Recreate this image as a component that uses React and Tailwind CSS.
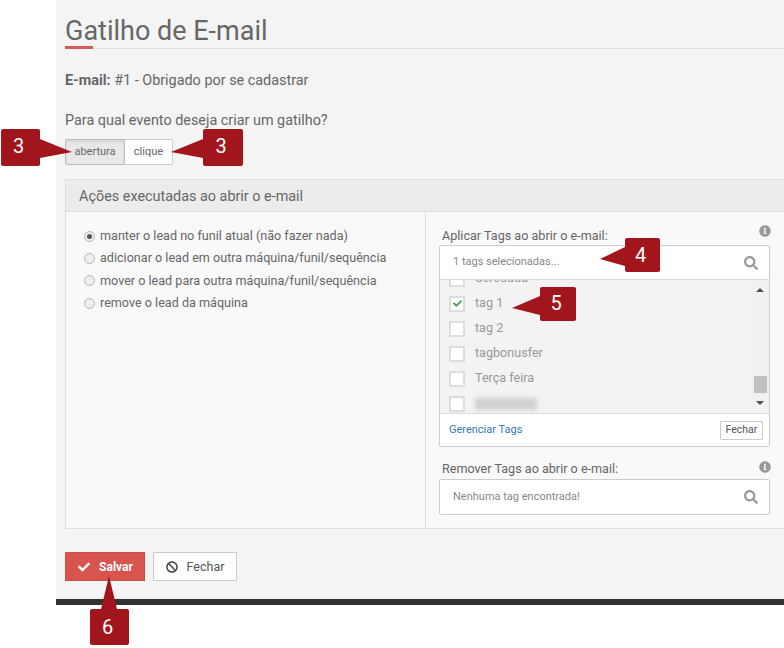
import React from 'react';
import { FaSearch, FaCheck, FaBan, FaInfoCircle } from 'react-icons/fa';

const options = [
  'manter o lead no funil atual (não fazer nada)',
  'adicionar o lead em outra máquina/funil/sequência',
  'mover o lead para outra máquina/funil/sequência',
  'remove o lead da máquina',
];

const Radio = ({ checked }) => (
  <span className="flex h-[11px] w-[11px] shrink-0 items-center justify-center rounded-full border border-[#b5b5b5] bg-[#eeeeee]">
    {checked && <span className="h-[5px] w-[5px] rounded-full bg-[#555555]" />}
  </span>
);

const TagRow = ({ label, checked, blurred }) => (
  <div className="flex h-[25px] items-center pl-[9px]">
    <span className="flex h-[16px] w-[16px] items-center justify-center border-2 border-[#dddddd] bg-white">
      {checked && <FaCheck className="text-[9px] text-[#3aa655]" />}
    </span>
    {blurred ? (
      <span className="ml-[10px] h-[12px] w-[62px] bg-[#d0d0d0] blur-[2px]" />
    ) : (
      <span className="ml-[10px] text-[12.6px] text-[#999999]">{label}</span>
    )}
  </div>
);

const SearchBox = ({ text, className }) => (
  <div className={`flex items-center justify-between bg-white pl-[13px] pr-[11px] ${className}`}>
    <span className="text-[11px] text-[#888888]">{text}</span>
    <FaSearch className="text-[14px] text-[#999999]" />
  </div>
);

// numbered marker painted on top of the screenshot
const Callout = ({ n, box, arrow, points }) => (
  <>
    <svg className="absolute" style={arrow} viewBox={`0 0 ${arrow.width} ${arrow.height}`}>
      <polygon points={points} fill="#a1161c" />
    </svg>
    <div
      className="absolute flex items-center justify-center rounded-[2px] bg-[#a1161c] pr-[4px] text-[20px] text-white"
      style={box}
    >
      {n}
    </div>
  </>
);

export default function App() {
  return (
    <div className="relative h-[648px] w-[784px] overflow-hidden bg-white font-['Roboto',sans-serif] text-[#666666]">
      <div className="ml-[56px] h-[605px] border-b-[6px] border-[#333333] bg-[#f4f4f4] pl-[9px]">
        {/* Title */}
        <div className="relative h-[49px] border-b border-[#dddddd] pt-[13px]">
          <h1 className="text-[27px] leading-[36px] text-[#666666]">Gatilho de E-mail</h1>
          <div className="absolute bottom-[-1px] left-0 h-[3px] w-[28px] bg-[#d05c56]" />
        </div>

        <p className="mt-[23px] text-[14.4px] leading-[18px]">
          <b className="font-bold">E-mail:</b> #1 - Obrigado por se cadastrar
        </p>
        <p className="mt-[22px] text-[14.4px] leading-[18px]">Para qual evento deseja criar um gatilho?</p>

        {/* Event toggle */}
        <div className="mt-[9px] flex h-[26px] w-[108px] text-[11px]">
          <div className="flex w-[60px] items-center justify-center rounded-l-[2px] border border-[#bbbbbb] bg-[#e8e8e8] shadow-[inset_0_2px_3px_rgba(0,0,0,0.08)]">
            abertura
          </div>
          <div className="flex flex-1 items-center justify-center rounded-r-[2px] border border-l-0 border-[#cccccc] bg-white">
            clique
          </div>
        </div>

        {/* Actions panel */}
        <div className="mt-[14px] h-[350px] border border-r-0 border-[#dddddd] bg-[#f9f9f9]">
          <div className="flex h-[32px] items-center border-b border-[#dddddd] bg-[#ececec] pl-[13px] pt-[2px] text-[14.4px]">
            Ações executadas ao abrir o e-mail
          </div>
          <div className="flex h-[316px]">
            <div className="w-[360px] border-r border-[#dddddd] pl-[18px] pt-[13px]">
              {options.map((o, i) => (
                <div key={o} className="flex h-[22.4px] items-center gap-[5px] text-[12.6px]">
                  <Radio checked={i === 0} />
                  <span>{o}</span>
                </div>
              ))}
            </div>

            <div className="w-[345px] pl-[13px] pt-[12px]">
              <div className="relative h-[21px] pl-[3px] pt-[2px] text-[12.6px] leading-[20px]">
                Aplicar Tags ao abrir o e-mail:
                <FaInfoCircle className="absolute right-0 top-[1px] text-[12px] text-[#999999]" />
              </div>
              <div className="w-[331px] rounded-[2px] border border-[#cccccc]">
                <SearchBox text="1 tags selecionadas..." className="h-[34px] border-b border-[#dddddd]" />
                <div className="relative h-[133px] overflow-hidden bg-[#f3f3f3]">
                  <div className="-mt-[14px]">
                    <TagRow label="Sereduda" />
                    <TagRow label="tag 1" checked />
                    <TagRow label="tag 2" />
                    <TagRow label="tagbonusfer" />
                    <TagRow label="Terça feira" />
                    <TagRow blurred />
                  </div>
                  <div className="absolute bottom-0 right-0 top-0 w-[17px] bg-[#f1f1f1]">
                    <div className="absolute left-[4px] top-[8px] h-0 w-0 border-x-[4px] border-b-[4px] border-x-transparent border-b-[#505050]" />
                    <div className="absolute left-[2px] top-[96px] h-[17px] w-[13px] bg-[#c1c1c1]" />
                    <div className="absolute bottom-[8px] left-[4px] h-0 w-0 border-x-[4px] border-t-[4px] border-x-transparent border-t-[#505050]" />
                  </div>
                </div>
                <div className="flex h-[33px] items-center justify-between border-t border-[#dddddd] bg-white pl-[9px] pr-[6px]">
                  <a className="pt-[1px] text-[11px] text-[#337ab7]">Gerenciar Tags</a>
                  <span className="flex h-[19px] w-[43px] items-center justify-center rounded-[1px] border border-[#cccccc] text-[10.5px] text-[#555555]">
                    Fechar
                  </span>
                </div>
              </div>

              <div className="relative mt-[12px] h-[20px] pl-[3px] text-[12.6px] leading-[20px]">
                Remover Tags ao abrir o e-mail:
                <FaInfoCircle className="absolute right-0 top-[2px] text-[12px] text-[#999999]" />
              </div>
              <SearchBox
                text="Nenhuma tag encontrada!"
                className="h-[36px] w-[331px] rounded-[2px] border border-[#cccccc]"
              />
            </div>
          </div>
        </div>

        {/* Footer buttons */}
        <div className="mt-[23px] flex gap-[8px]">
          <button className="flex h-[29px] w-[80px] items-center justify-center gap-[9px] border border-[#c9504a] bg-[#d9534f] pl-[1px] text-[12px] font-bold text-white">
            <FaCheck className="text-[12px]" /> Salvar
          </button>
          <button className="flex h-[29px] w-[84px] items-center justify-center gap-[9px] border border-[#cccccc] bg-white text-[12.5px] text-[#555555]">
            <FaBan className="text-[12px] text-[#444444]" /> <span className="mt-[1px]">Fechar</span>
          </button>
        </div>
      </div>

      <Callout
        n={3}
        box={{ left: 1, top: 129, width: 39, height: 37, paddingBottom: 3 }}
        arrow={{ left: 40, top: 139, width: 33, height: 19 }}
        points="0,0 32,13 0,19"
      />
      <Callout
        n={3}
        box={{ left: 203, top: 129, width: 40, height: 37, paddingBottom: 3 }}
        arrow={{ left: 171, top: 139, width: 32, height: 19 }}
        points="32,0 0,13 32,19"
      />
      <Callout
        n={4}
        box={{ left: 625, top: 238, width: 35, height: 34 }}
        arrow={{ left: 600, top: 247, width: 25, height: 19 }}
        points="25,0 0,12 25,19"
      />
      <Callout
        n={5}
        box={{ left: 540, top: 287, width: 36, height: 34, paddingBottom: 3 }}
        arrow={{ left: 512, top: 296, width: 28, height: 19 }}
        points="28,0 0,12 28,19"
      />
      <Callout
        n={6}
        box={{ left: 90, top: 609, width: 39, height: 36 }}
        arrow={{ left: 101, top: 576, width: 16, height: 33 }}
        points="8,0 0,33 16,33"
      />
    </div>
  );
}
